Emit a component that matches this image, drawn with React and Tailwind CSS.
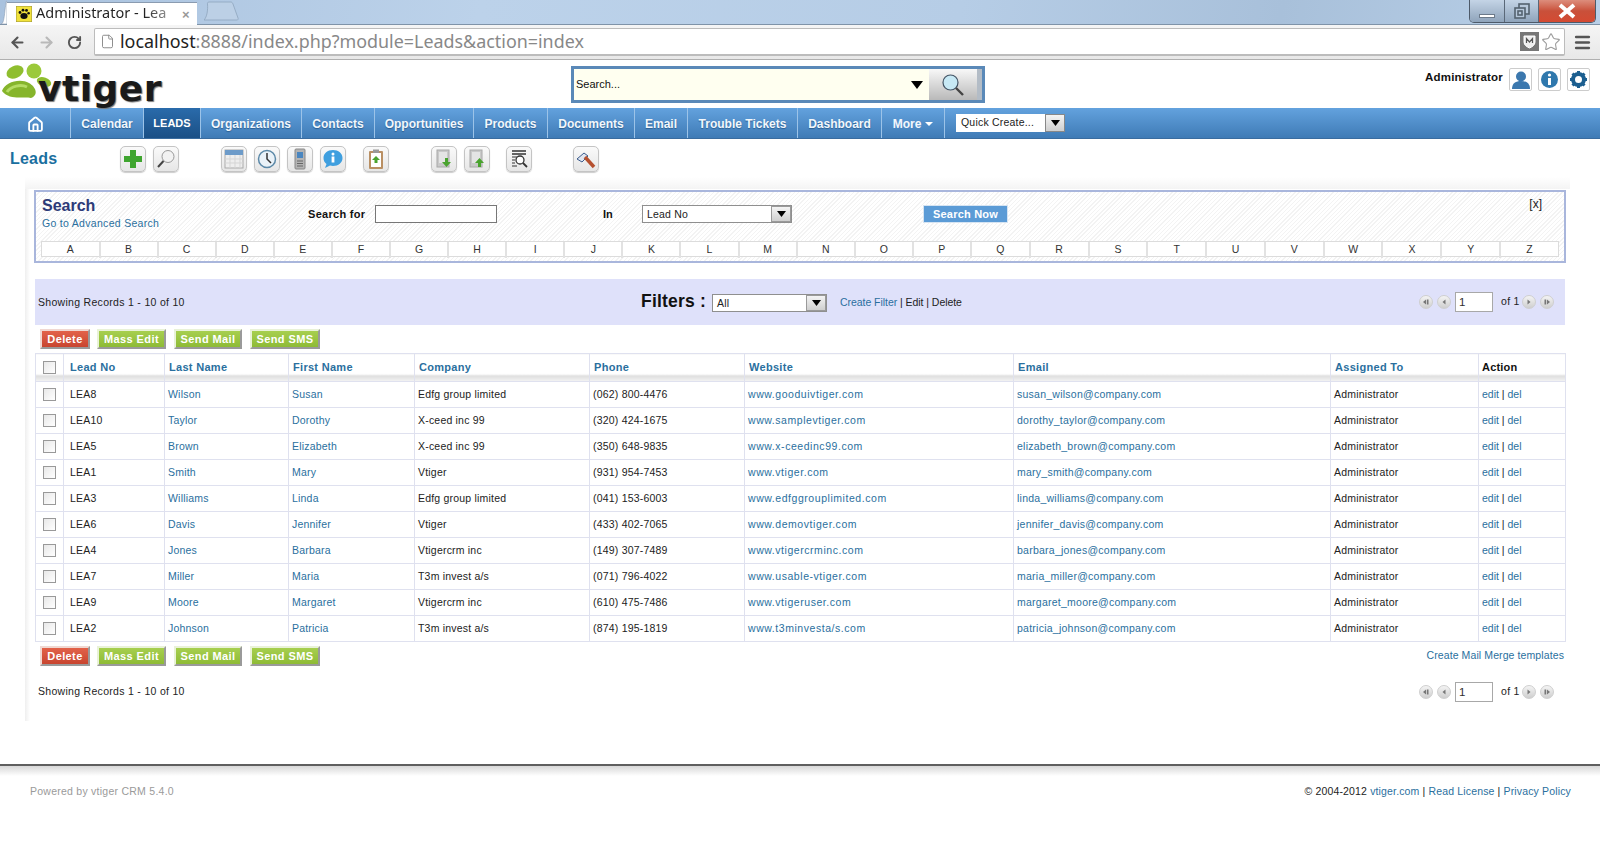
import React from "react";
import { ArrowLeft, ArrowRight, RotateCw, Star, File, Menu, Home } from "lucide-react";

const rows = [
  ["LEA8","Wilson","Susan","Edfg group limited","(062) 800-4476","www.gooduivtiger.com","susan_wilson@company.com"],
  ["LEA10","Taylor","Dorothy","X-ceed inc 99","(320) 424-1675","www.samplevtiger.com","dorothy_taylor@company.com"],
  ["LEA5","Brown","Elizabeth","X-ceed inc 99","(350) 648-9835","www.x-ceedinc99.com","elizabeth_brown@company.com"],
  ["LEA1","Smith","Mary","Vtiger","(931) 954-7453","www.vtiger.com","mary_smith@company.com"],
  ["LEA3","Williams","Linda","Edfg group limited","(041) 153-6003","www.edfggrouplimited.com","linda_williams@company.com"],
  ["LEA6","Davis","Jennifer","Vtiger","(433) 402-7065","www.demovtiger.com","jennifer_davis@company.com"],
  ["LEA4","Jones","Barbara","Vtigercrm inc","(149) 307-7489","www.vtigercrminc.com","barbara_jones@company.com"],
  ["LEA7","Miller","Maria","T3m invest a/s","(071) 796-4022","www.usable-vtiger.com","maria_miller@company.com"],
  ["LEA9","Moore","Margaret","Vtigercrm inc","(610) 475-7486","www.vtigeruser.com","margaret_moore@company.com"],
  ["LEA2","Johnson","Patricia","T3m invest a/s","(874) 195-1819","www.t3minvesta/s.com","patricia_johnson@company.com"],
];
const nav = [
  ["Calendar","w-[73px]"],["LEADS","w-[57px]"],["Organizations","w-[101px]"],["Contacts","w-[73px]"],
  ["Opportunities","w-[99px]"],["Products","w-[74px]"],["Documents","w-[87px]"],["Email","w-[53px]"],
  ["Trouble Tickets","w-[110px]"],["Dashboard","w-[84px]"],
];
const letters = "ABCDEFGHIJKLMNOPQRSTUVWXYZ".split("");
const headers = ["Lead No","Last Name","First Name","Company","Phone","Website","Email","Assigned To"];
const link = "text-[#2a6f9e]";
const headBg = "bg-[linear-gradient(180deg,#fff_0,#fff_72%,#dedede_80%,#f4f4f4_100%)]";

function Tool({ children, className = "" }) {
  return (
    <div className={`w-[26px] h-[26px] rounded-[5px] border border-[#c4c4c4] bg-gradient-to-b from-[#fafafa] to-[#e6e6e6] shadow-[0_1px_1px_#ccc] flex items-center justify-center shrink-0 ${className}`}>
      <svg width="22" height="22" viewBox="0 0 22 22">{children}</svg>
    </div>
  );
}
const DocIcon = () => (
  <>
    <rect x="4" y="2" width="12" height="17" fill="#c9c9c9" stroke="#a8a8a8" />
    <rect x="6" y="4" width="8" height="11" fill="#e4e4e4" />
  </>
);
function Pager({ dir, bar }) {
  return (
    <span className="w-[14px] h-[14px] rounded-full border border-[#cfcfcf] bg-gradient-to-b from-[#f4f4f4] to-[#cfcfcf] flex items-center justify-center shrink-0">
      <svg width="8" height="8" viewBox="0 0 8 8" fill="#777">
        {dir === "l"
          ? <path d={bar ? "M4 1.500v5L1 4z" : "M5.500 1.500v5L2.500 4z"} />
          : <path d={bar ? "M4 1.500v5L7 4z" : "M2.500 1.500v5L5.500 4z"} />}
        {bar && (dir === "l" ? <rect x="4.800" y="1.500" width="1.700" height="5" /> : <rect x="1.500" y="1.500" width="1.700" height="5" />)}
      </svg>
    </span>
  );
}
function Pagination() {
  return (
    <div className="flex items-center">
      <Pager dir="l" bar />
      <span className="w-[4px]" />
      <Pager dir="l" />
      <div className="ml-[4px] w-[38px] h-[20px] border border-[#a8a8a8] bg-white pl-[3px] text-[11.5px] leading-[18px] text-[#303030]">1</div>
      <span className="ml-[8px] w-[21px] text-[10.5px] tracking-[0.3px] text-[#222]">of 1</span>
      <Pager dir="r" />
      <span className="w-[4px]" />
      <Pager dir="r" bar />
    </div>
  );
}
function Buttons() {
  const base = "h-[20px] flex items-center justify-center text-white font-bold text-[11px] tracking-[0.4px] border-b-2 border-r-2 border-[#9a9a9a] border-l-2 border-l-[#e9f2d8] border-t-2 border-t-[#e9f2d8]";
  return (
    <div className="flex">
      <div className={`${base} w-[50px] bg-gradient-to-b from-[#e2624a] to-[#c8452f] border-l-[#f0d8d2] border-t-[#f0d8d2]`}>Delete</div>
      <div className={`${base} ml-[7px] w-[69px] bg-gradient-to-b from-[#a7cf4f] to-[#8ebb35]`}>Mass Edit</div>
      <div className={`${base} ml-[8px] w-[68px] bg-gradient-to-b from-[#a7cf4f] to-[#8ebb35]`}>Send Mail</div>
      <div className={`${base} ml-[8px] w-[70px] bg-gradient-to-b from-[#a7cf4f] to-[#8ebb35]`}>Send SMS</div>
    </div>
  );
}
const Arrow = ({ small }) => (
  <svg width={small ? 9 : 12} height={small ? 6 : 8} viewBox="0 0 12 8"><path d="M0 0h12L6 8z" fill="#000" /></svg>
);
const Sel = ({ className, text }) => (
  <div className={`border border-[#8f8f8f] bg-white flex items-center ${className}`}>
    <span className="flex-1 pl-[4px] pt-[1px] text-[10.5px] tracking-[0.2px] text-[#222]">{text}</span>
    <span className="w-[20px] h-full border border-[#9a9a9a] bg-gradient-to-b from-[#f4f4f4] to-[#cfcfcf] flex items-center justify-center"><Arrow small /></span>
  </div>
);

export default function App() {
  return (
    <div className="w-[1600px] h-[852px] overflow-hidden bg-white font-['Liberation_Sans',Arial,sans-serif] text-[11px] text-[#222]">
      {/* browser tab strip */}
      <div className="h-[25px] flex bg-[linear-gradient(100deg,#a9c2de_0%,#bcd2ea_30%,#b6cde6_60%,#a8c0da_80%,#b9d0e8_100%)] border-b border-[#7f93a8]">
        <svg width="6" height="24" viewBox="0 0 6 24" className="ml-[1px] shrink-0 self-end"><path d="M0 24C2 24 3 20 4 10 5 3 5 1 6 1V24z" fill="#fff" stroke="#8a9bb0" strokeWidth="0.6" /></svg>
        <div className="w-[190px] h-[23px] mt-[1px] bg-white border-t border-[#8a9bb0] flex items-center pl-[9px] relative top-[1px]">
          <svg width="16" height="16" viewBox="0 0 16 16" className="shrink-0"><rect width="16" height="16" fill="#f1e23c" stroke="#99903a" /><ellipse cx="8" cy="10" rx="3.6" ry="3" fill="#111"/><circle cx="4" cy="6.5" r="1.4" fill="#111"/><circle cx="7" cy="4.2" r="1.4" fill="#111"/><circle cx="10.5" cy="4.4" r="1.4" fill="#111"/><circle cx="12.6" cy="7.2" r="1.3" fill="#111"/></svg>
          <span className="ml-[4px] mt-[-4px] font-['Noto_Sans',sans-serif] text-[14.5px] leading-[18px] whitespace-nowrap w-[143px] bg-[linear-gradient(90deg,#222_76%,#ccc_100%)] bg-clip-text text-transparent">Administrator - Lea</span>
          <span className="ml-[3px] text-[#999] text-[13px] font-bold leading-none">×</span>
        </div>
        <svg width="42" height="24" viewBox="0 0 42 24" className="shrink-0 self-end ml-[7px]"><path d="M0 20H33C34 20 34.500 19 34 18L29 4C28.500 3 28 2 27 2H5C3.500 2 3.500 3 3.500 4 4 10 3 17 0 20Z" fill="#bcd0e6" stroke="#8ea4bc" strokeWidth="0.8" /></svg>
        <div className="ml-auto mr-[4px] h-[23px] w-[127px] flex rounded-b-[5px] overflow-hidden border border-t-0 border-[#4d5a69]">
          <div className="w-[35px] border-r border-[#5a6878] bg-gradient-to-b from-[#c4d4e6] to-[#8fa4bb] flex items-end justify-center pb-[4px]"><span className="w-[16px] h-[4px] bg-white border border-[#6c7a8a]" /></div>
          <div className="w-[34px] border-r border-[#5a6878] bg-gradient-to-b from-[#c4d4e6] to-[#8fa4bb] flex items-center justify-center">
            <svg width="16" height="16" viewBox="0 0 16 16" fill="none" stroke="#54626f" strokeWidth="1.6"><rect x="5" y="1" width="10" height="10" fill="#b6c7da" /><rect x="1" y="5" width="10" height="10" fill="#b6c7da" /><rect x="4" y="8" width="4" height="4" /></svg>
          </div>
          <div className="flex-1 bg-gradient-to-b from-[#dc8d7c] via-[#c9503a] to-[#d44a32] flex items-center justify-center">
            <svg width="20" height="16" viewBox="0 0 20 16"><path d="M3 2l14 12M17 2L3 14" stroke="#fff" strokeWidth="4" /></svg>
          </div>
        </div>
      </div>
      {/* browser toolbar */}
      <div className="h-[35px] flex items-center bg-gradient-to-b from-[#f5f5f5] to-[#e8e8e8] border-b border-[#b0b0b0]">
        <ArrowLeft className="ml-[9px] shrink-0 text-[#555]" size={17} strokeWidth={3} />
        <ArrowRight className="ml-[12px] shrink-0 text-[#b9b9b9]" size={17} strokeWidth={3} />
        <RotateCw className="ml-[12px] shrink-0 text-[#555]" size={15} strokeWidth={3} />
        <div className="ml-[12px] w-[1471px] h-[28px] rounded-[2px] border border-[#bcbcbc] border-b-2 bg-white flex items-center pl-[5px] shrink-0">
          <File size={15} className="text-[#888] shrink-0" strokeWidth={1.5} />
          <span className="ml-[5px] font-['Noto_Sans',sans-serif] text-[17.9px] text-[#888] whitespace-nowrap"><span className="text-[#222]">localhost</span>:8888/index.php?module=Leads&amp;action=index</span>
          <div className="ml-auto flex items-center pr-[3px]">
            <span className="w-[19px] h-[19px] bg-[#777] flex items-center justify-center">
              <svg width="15" height="15" viewBox="0 0 15 15"><path d="M2 2h11v6c0 3-3 5-5.5 6C5 13 2 11 2 8z" fill="#eee" stroke="#fff" /><path d="M4.500 9V4.500L7.500 8l3-3.500V9" stroke="#555" fill="none" strokeWidth="1.2" /></svg>
            </span>
            <Star size={20} className="ml-[2px] text-[#9a9a9a]" strokeWidth={1.3} />
          </div>
        </div>
        <Menu size={19} className="ml-[8px] text-[#555] shrink-0" strokeWidth={3.2} />
      </div>
      {/* app header */}
      <div className="h-[48px] flex relative">
        <div className="w-[571px] relative shrink-0">
          <svg width="52" height="42" viewBox="0 0 52 42" className="absolute left-[1px] top-[2px]">
            <ellipse cx="14" cy="10" rx="9" ry="6" transform="rotate(-25 14 10)" fill="#8fbe2f" />
            <ellipse cx="33" cy="9" rx="7.500" ry="7.500" fill="#9bc93a" />
            <ellipse cx="43" cy="20" rx="7.500" ry="4.500" transform="rotate(20 43 20)" fill="#8fbe2f" />
            <path d="M1 29C4 20 19 16 28 21 35 25 38 33 30 36 22 34 9 39 1 29Z" fill="#86b52b" />
            <path d="M6 30C10 24 20 22 26 25" stroke="#b5dc63" strokeWidth="3" fill="none" />
          </svg>
          <span className="absolute left-[38px] top-[9px] font-['DejaVu_Sans',sans-serif] font-bold text-[36px] leading-[40px] text-[#1a1a1a] [text-shadow:1px_1px_1px_#777] tracking-[0.5px]">vtiger</span>
        </div>
        <div className="mt-[6px] w-[414px] h-[37px] border-[3px] border-[#5a89b8] flex shrink-0 bg-[#fffff0]">
          <span className="flex-1 flex items-center pl-[2px] text-[11px] text-[#111]">Search...</span>
          <span className="w-[14px] flex items-center"><Arrow /></span>
          <span className="ml-[4px] w-[48px] bg-gradient-to-b from-[#f8f8f8] to-[#b9b9b9] flex items-center justify-center">
            <svg width="24" height="24" viewBox="0 0 24 24" fill="none"><circle cx="9.500" cy="9.500" r="7.500" fill="#c7e9f5" stroke="#456" strokeWidth="1.2" /><path d="M15 15l7 7" stroke="#444" strokeWidth="2.400" /></svg>
          </span>
          <span className="w-[5px] bg-[#b3bcc6]" />
        </div>
        <div className="ml-auto flex items-start pt-[8px] pr-[10px]">
          <span className="font-bold text-[11.5px] tracking-[0.2px] text-[#111] mt-[1px] mr-[6px]">Administrator</span>
          <span className="w-[23px] h-[23px] border border-[#ccc] rounded-[2px] flex items-center justify-center"><svg width="20" height="20" viewBox="0 0 20 20" fill="#3c78ae"><circle cx="10" cy="6.500" r="5" /><path d="M1 19c0-6 4-8 9-8s9 2 9 8z" /></svg></span>
          <span className="ml-[6px] w-[23px] h-[23px] border border-[#ccc] rounded-[2px] flex items-center justify-center"><svg width="19" height="19" viewBox="0 0 19 19"><circle cx="9.500" cy="9.500" r="8.500" fill="#2f78ad" /><circle cx="9.500" cy="5" r="1.600" fill="#fff" /><rect x="8" y="8" width="3" height="7" fill="#fff" /></svg></span>
          <span className="ml-[6px] w-[23px] h-[23px] border border-[#ccc] rounded-[2px] flex items-center justify-center"><svg width="19" height="19" viewBox="0 0 19 19"><circle cx="9.500" cy="9.500" r="5.500" fill="none" stroke="#1c5f90" strokeWidth="4" /><path d="M9.500 1v3M9.500 15v3M1 9.500h3M15 9.500h3M3.500 3.500l2 2M13.500 13.500l2 2M15.500 3.500l-2 2M5.500 13.500l-2 2" stroke="#1c5f90" strokeWidth="3" /></svg></span>
        </div>
      </div>
      {/* nav */}
      <div className="h-[31px] flex items-stretch bg-gradient-to-b from-[#63a2de] to-[#3f7bb6] border-b border-[#3a6c9f]">
        <div className="w-[71px] flex items-center justify-center border-r border-[#9cc3e8]">
          <Home size={17} className="text-white mt-[2px]" strokeWidth={2.6} />
        </div>
        {nav.map(([t, w]) => (
          <div key={t} className={`${w} pt-[1px] flex items-center justify-center border-r border-[#9cc3e8] font-bold whitespace-nowrap [text-shadow:0_1px_1px_#2c5f91] ${t === "LEADS" ? "text-[11px] bg-gradient-to-b from-[#2a6bab] to-[#1b5086] text-white" : "text-[12px] text-[#f2f7fc]"}`}>{t}</div>
        ))}
        <div className="w-[63px] pt-[1px] flex items-center justify-center border-r border-[#9cc3e8] font-bold text-[12px] text-[#f2f7fc]">More<svg width="8" height="4" viewBox="0 0 8 4" className="ml-[4px]"><path d="M0 0h8L4 4z" fill="#fff" /></svg></div>
        <div className="ml-[11px] my-[6px] w-[109px] bg-white flex items-center">
          <span className="flex-1 pl-[5px] text-[10.5px] tracking-[0.2px] text-[#222] whitespace-nowrap">Quick Create...</span>
          <span className="w-[20px] h-full border border-[#888] bg-gradient-to-b from-[#f4f4f4] to-[#cfcfcf] flex items-center justify-center"><Arrow small /></span>
        </div>
      </div>
      {/* module toolbar */}
      <div className="h-[38px] pt-[2px] flex items-center">
        <span className="ml-[10px] w-[110px] font-bold text-[16px] tracking-[0.2px] text-[#1a6f9f]">Leads</span>
        <Tool><path d="M8 2h6v6h6v6h-6v6H8v-6H2V8h6z" fill="#3fa52f" /></Tool>
        <Tool className="ml-[7px]"><circle cx="13" cy="8.500" r="6" fill="#f2f2f2" stroke="#999" /><path d="M8.500 13L3 19" stroke="#444" strokeWidth="2" /></Tool>
        <Tool className="ml-[42px]"><rect x="2" y="2" width="18" height="18" fill="#eee" stroke="#aaa" /><rect x="2" y="2" width="18" height="5" fill="#6d9bc9" /><path d="M2 11h18M2 15h18M7 7v13M12 7v13M17 7v13" stroke="#d5d5d5" /></Tool>
        <Tool className="ml-[7px]"><circle cx="11" cy="11" r="8.500" fill="#eaf2f8" stroke="#5c89a8" strokeWidth="1.500" /><path d="M11 5v6l4 4" stroke="#333" strokeWidth="1.500" fill="none" /></Tool>
        <Tool className="ml-[7px]"><rect x="6" y="1" width="10" height="20" rx="1" fill="#b4b4b4" stroke="#888" /><rect x="8" y="4" width="6" height="6" fill="#4a86c0" /><path d="M8 13h6M8 15.500h6M8 18h6" stroke="#666" /></Tool>
        <Tool className="ml-[7px]"><path d="M11 2c5.500 0 9.500 3.500 9.500 8s-4 8-9.500 8c-1 0-2-.1-3-.4L3 20l1.500-4C2.500 14.500 1.500 12.500 1.500 10c0-4.500 4-8 9.500-8z" fill="#3f9fdf" /><circle cx="11" cy="6" r="1.500" fill="#fff" /><rect x="9.600" y="8.500" width="2.800" height="6" fill="#fff" /></Tool>
        <Tool className="ml-[17px]"><rect x="4" y="3" width="14" height="18" rx="1" fill="#b98f63" /><rect x="6" y="5" width="10" height="14" fill="#fff" /><rect x="8" y="1.500" width="6" height="3.500" fill="#999" /><path d="M11 8l-4 4h2.500v3h3v-3H15z" fill="#4aa32f" /></Tool>
        <Tool className="ml-[42px]"><DocIcon /><path d="M15 10v4h3l-4.500 5L9 14h3v-4z" fill="#4aa32f" /></Tool>
        <Tool className="ml-[7px]"><DocIcon /><path d="M12 19v-4H9l4.500-5 4.500 5h-3v4z" fill="#4aa32f" /></Tool>
        <Tool className="ml-[16px]"><path d="M4 3h14M4 6h14" stroke="#333" strokeWidth="1.300" /><path d="M4 9h5M4 12h3M4 15h3M4 18h5" stroke="#333" /><circle cx="12" cy="12" r="4" fill="#fff" stroke="#333" strokeWidth="1.300" /><path d="M15 15l4 4" stroke="#333" strokeWidth="1.800" /></Tool>
        <Tool className="ml-[41px]"><path d="M2 11l7-6 4 3-6 6z" fill="#dfe5f0" stroke="#3b5b8c" /><path d="M10 9l9 10" stroke="#b5502f" strokeWidth="3.500" /></Tool>
      </div>
      {/* content */}
      <div className="ml-[25px] h-[544px] pl-[9px] pr-[35px] pt-[13px] bg-[linear-gradient(90deg,#efefef_0,#fff_5px)] w-[1575px] relative">
        <div className="absolute left-0 right-[30px] top-0 h-[12px] bg-gradient-to-b from-white to-[#f4f4f4]" />
        <div className="relative h-[73px] w-[1532px] border-2 border-[#a9b6dc] bg-[repeating-linear-gradient(135deg,#ffffff_0,#ffffff_2px,#f3f3f3_2px,#f3f3f3_3px)]">
          <div className="h-[49px] flex relative">
            <div className="pl-[6px] pt-[4px] w-[272px]">
              <div className="font-bold text-[16px] leading-[19px] text-[#2d3a78]">Search</div>
              <div className={`text-[10.5px] leading-[14px] mt-[1px] tracking-[0.3px] ${link}`}>Go to Advanced Search</div>
            </div>
            <span className="pt-[14px] w-[67px] font-bold text-[11px] tracking-[0.3px] text-[#111]">Search for</span>
            <div className="mt-[13px] w-[122px] h-[18px] border border-[#777] bg-white" />
            <span className="pt-[14px] ml-[106px] w-[39px] font-bold text-[11px] text-[#111]">In</span>
            <Sel className="mt-[13px] w-[150px] h-[18px]" text="Lead No" />
            <div className="ml-[131px] mt-[13px] w-[85px] h-[18px] bg-[#5b9bd6] border border-[#d6e4f2] flex items-center justify-center font-bold text-[11px] tracking-[0.2px] text-white">Search Now</div>
            <span className="absolute right-[22px] top-[3px] text-[12px] text-[#222]">[x]</span>
          </div>
          <div className="ml-[5px] w-[1518px] grid grid-cols-[56.5px_repeat(15,58.1px)_repeat(10,58.8px)] h-[16px] bg-white border border-[#dcdcdc]">
            {letters.map((l, i) => (
              <span key={l} className={`flex items-center justify-center text-[10.5px] text-[#333] ${i ? "border-l-2 border-[#e2e2e2]" : ""}`}>{l}</span>
            ))}
          </div>
        </div>
        <div className="relative mt-[16px] ml-[1px] w-[1530px] h-[46px] bg-[#dfe1fa] flex items-center">
          <span className="ml-[3px] mt-[1px] w-[603px] text-[10.5px] tracking-[0.3px] text-[#222]">Showing Records 1 - 10 of 10</span>
          <span className="font-bold text-[17.5px] mt-[-1px] tracking-[0.2px] text-[#111] whitespace-nowrap">Filters :</span>
          <Sel className="ml-[6px] w-[115px] h-[18px] mt-[2px] bg-white" text="All" />
          <span className="ml-[13px] mt-[1px] text-[10.5px] tracking-[-0.05px] text-[#222] whitespace-nowrap"><span className={link}>Create Filter</span> | Edit | Delete</span>
          <div className="ml-auto mr-[11px]"><Pagination /></div>
        </div>
        <div className="relative mt-[4px] ml-[6px]"><Buttons /></div>
        <table className="relative mt-[4px] ml-[1px] w-[1530px] table-fixed border-collapse text-[10.5px] tracking-[0.2px]">
          <colgroup>
            <col className="w-[28px]" /><col className="w-[101px]" /><col className="w-[124px]" /><col className="w-[126px]" /><col className="w-[175px]" /><col className="w-[155px]" /><col className="w-[269px]" /><col className="w-[317px]" /><col className="w-[148px]" /><col className="w-[87px]" />
          </colgroup>
          <thead>
            <tr className="h-[28px]">
              <th className={`border border-[#dfe1ef] ${headBg} p-0 text-center`}><span className="inline-block w-[13px] h-[13px] border border-[#999] bg-gradient-to-br from-[#e8e8e8] to-white align-middle" /></th>
              {headers.map((h, i) => (
                <th key={h} className={`border border-[#dfe1ef] ${headBg} ${i === 0 ? "pl-[6px]" : "pl-[4px]"} pr-[3px] pb-[1px] text-left font-bold text-[11px] tracking-[0.3px] ${link}`}>{h}</th>
              ))}
              <th className={`border border-[#dfe1ef] ${headBg} px-[3px] text-left font-bold text-[11px] tracking-[0.2px] text-[#111]`}>Action</th>
            </tr>
          </thead>
          <tbody>
            {rows.map((r) => (
              <tr key={r[0]} className="h-[26px]">
                <td className="border border-[#dfe1ef] p-0 text-center"><span className="inline-block w-[13px] h-[13px] border border-[#999] bg-gradient-to-br from-[#e8e8e8] to-white align-middle" /></td>
                <td className="border border-[#dfe1ef] pl-[6px]">{r[0]}</td>
                <td className={`border border-[#dfe1ef] px-[3px] ${link}`}>{r[1]}</td>
                <td className={`border border-[#dfe1ef] px-[3px] ${link}`}>{r[2]}</td>
                <td className="border border-[#dfe1ef] px-[3px]">{r[3]}</td>
                <td className="border border-[#dfe1ef] px-[3px]">{r[4]}</td>
                <td className={`border border-[#dfe1ef] px-[3px] tracking-[0.55px] ${link}`}>{r[5]}</td>
                <td className={`border border-[#dfe1ef] px-[3px] tracking-[0.25px] ${link}`}>{r[6]}</td>
                <td className="border border-[#dfe1ef] px-[3px]">Administrator</td>
                <td className="border border-[#dfe1ef] px-[3px] tracking-[0px]"><span className={link}>edit</span> | <span className={link}>del</span></td>
              </tr>
            ))}
          </tbody>
        </table>
        <div className="relative mt-[4px] ml-[6px] w-[1525px] flex items-center">
          <Buttons />
          <span className={`ml-auto mr-[1px] mt-[-1px] text-[10.5px] tracking-[0.1px] ${link}`}>Create Mail Merge templates</span>
        </div>
        <div className="relative mt-[16px] ml-[1px] w-[1530px] flex items-center">
          <span className="ml-[3px] text-[10.5px] tracking-[0.3px] text-[#222]">Showing Records 1 - 10 of 10</span>
          <div className="ml-auto mr-[11px]"><Pagination /></div>
        </div>
      </div>
      {/* footer */}
      <div className="mt-[43px] h-[12px] border-t-2 border-[#5f5f5f] bg-gradient-to-b from-[#d8d8d8] to-white" />
      <div className="flex justify-between mt-[8px] px-[30px] pr-[29px] text-[10.5px] tracking-[0.15px]">
        <span className="text-[#9a9a9a] tracking-[0.25px]">Powered by vtiger CRM 5.4.0</span>
        <span className="text-[#222]">© 2004-2012 <span className={link}>vtiger.com</span> | <span className={link}>Read License</span> | <span className={link}>Privacy Policy</span></span>
      </div>
    </div>
  );
}
